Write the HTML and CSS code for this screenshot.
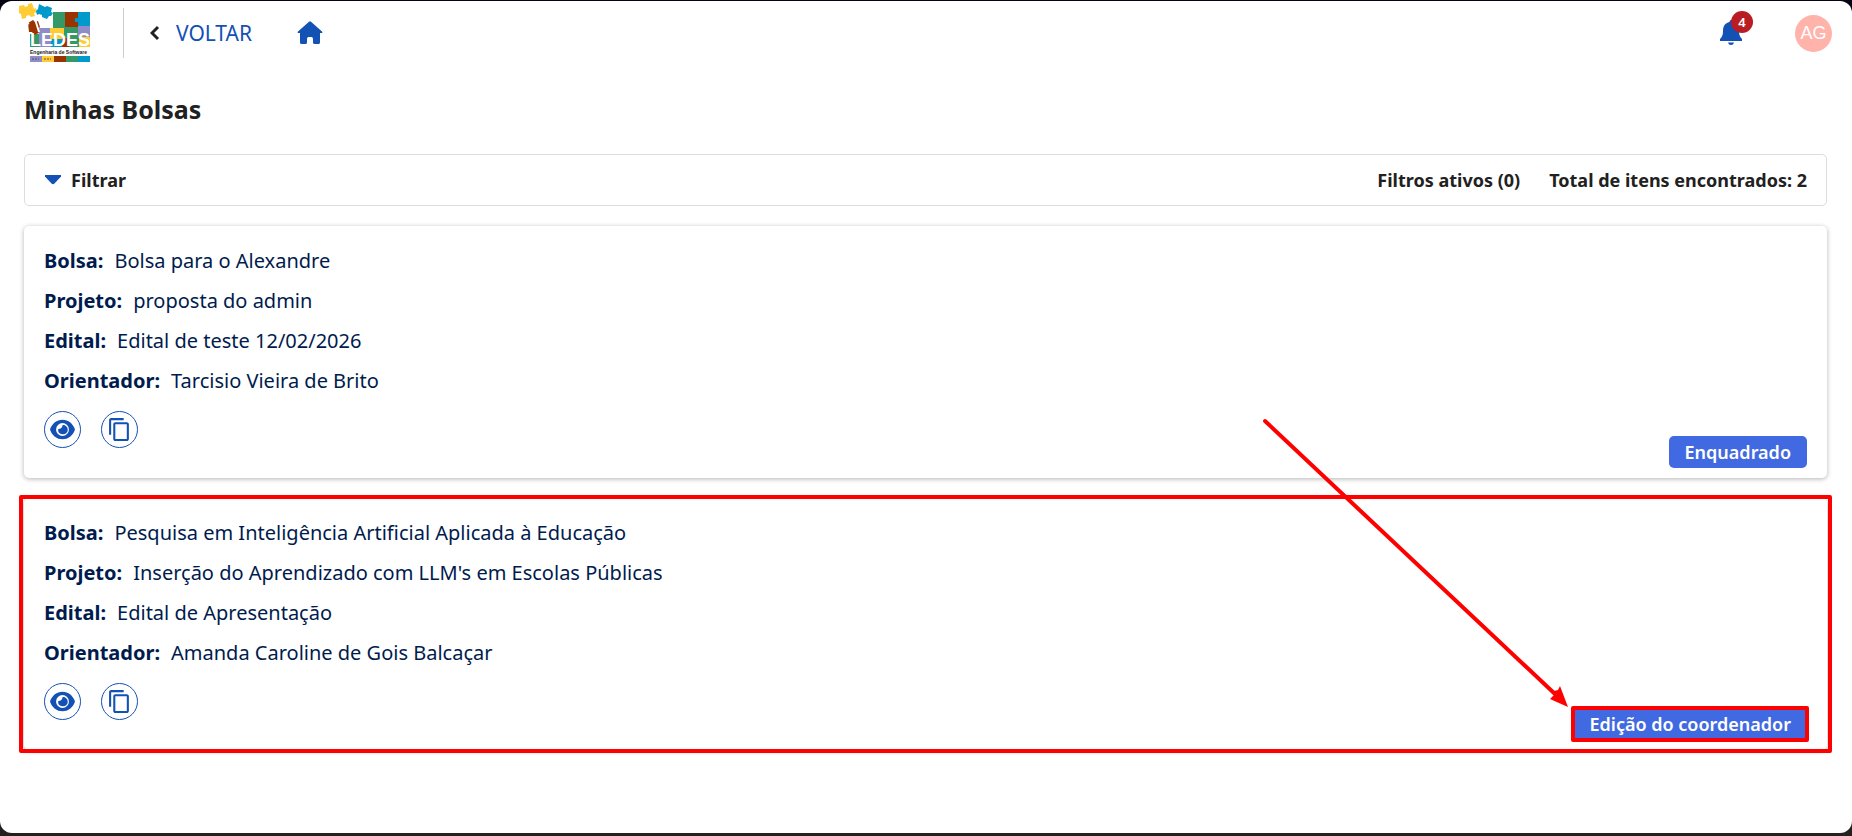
FILE: index.html
```html
<!DOCTYPE html>
<html lang="pt-BR">
<head>
  <meta charset="UTF-8" />
  <meta name="viewport" content="width=device-width, initial-scale=1.0" />
  <title>Minhas Bolsas</title>
  <link rel="stylesheet" href="styles.css">
</head>
<body>
  <!-- shared icons -->
  <svg width="0" height="0" class="sprite" aria-hidden="true">
    <symbol id="icon-eye" viewBox="0 0 24 24">
      <path fill-rule="evenodd" d="M12 2.600C6.500 2.600 2 6 0 12c2 6 6.500 9.400 12 9.400S22 18 24 12C22 6 17.500 2.600 12 2.600zM12 18.200a6.200 6.200 0 1 1 0-12.400 6.200 6.200 0 0 1 0 12.400z" />
      <path d="M12 7.800c0 2.200-1.600 3.700-4 3.700-.8 2.800 1.200 5 4 5a4.400 4.400 0 1 0 0-8.700z" />
    </symbol>
    <symbol id="icon-copy" viewBox="0 0 24 24">
      <path d="M16 1H4c-1.100 0-2 .9-2 2v14h2V3h12V1zm3 4H8c-1.100 0-2 .9-2 2v14c0 1.100.9 2 2 2h11c1.100 0 2-.9 2-2V7c0-1.100-.9-2-2-2zm0 16H8V7h11v14z" />
    </symbol>
  </svg>

  <div class="page">
    <header class="topbar">
      <a href="#" class="logo" aria-label="LEDES">
        <svg viewBox="0 0 72 58" width="72" height="58">
          <!-- puzzle board -->
          <path d="M11 30h10v13H11z" fill="#339966" />
          <path d="M20 24h12v19H20z" fill="#8f8cc8" />
          <path d="M34 8h13v16H34z" fill="#339966" />
          <path d="M46 8h13v6h-3v4h3v6H46z" fill="#993300" />
          <path d="M59 8h12v15H59v-5h-3v-4h3z" fill="#0099cc" />
          <path d="M31 24h14v12H31z" fill="#ffcc33" />
          <path d="M45 23h14v13H45z" fill="#339966" />
          <path d="M59 22h12v12H59z" fill="#8f8cc8" />
          <path d="M32 35h12v8H32z" fill="#0099cc" />
          <path d="M43 34h8v9h-8z" fill="#993300" />
          <path d="M50 34h10v9H50z" fill="#339966" />
          <path d="M60 33h11v10H60z" fill="#ffcc33" />
          <!-- loose pieces -->
          <path d="M0 2l5-1 1 2 3-1V0l4-1 2 6 2-1 1 4-3 1 1 3-4 1-2-2-3 1v2l-4 1-1-5-2-1z" fill="#ffcc33" />
          <path d="M20 0l6 3 2-1 5 2-1 4 2 1-2 3-2 0-2 3-5-2 0-2-3-1-2 1-1-4 2-2z" fill="#0099cc" />
          <path d="M9 19l5-3 2 2 3-1 2 6-2 2 1 4-5 2-2-3-3 0z" fill="#993300" />
          <path d="M5 17l4 14M4 22l6-3M16 15l4 13" stroke="#fff" stroke-width="2" fill="none" />
          <text x="11" y="42" class="logo-name">LEDES</text>
          <text x="11" y="50" class="logo-sub">Engenharia de Software</text>
          <path d="M11 52h12v6H11z" fill="#8f8cc8" />
          <path d="M23 52h12v6H23z" fill="#ffcc33" />
          <path d="M35 52h12v6H35z" fill="#993300" />
          <path d="M47 52h12v6H47z" fill="#339966" />
          <path d="M59 52h12v6H59z" fill="#0099cc" />
          <path d="M13 55h7M25 55h7" stroke="#555" stroke-width="1" stroke-dasharray="2 1" />
        </svg>
      </a>
      <a href="#" class="back">
        <svg viewBox="0 0 10 16" width="10" height="16"><path d="M8 2L2 8l6 6" fill="none" stroke="#212121" stroke-width="3" /></svg>
        VOLTAR
      </a>
      <a href="#" class="home" aria-label="Início">
        <svg viewBox="0 0 26 24" width="26" height="24"><path d="M12 .7q1-.9 2 0L25 10.500q1 1.500-.6 1.500H23v9.500q0 1.500-1.500 1.500h-4q-1.500 0-1.500-1.500V18q0-2-1.500-2h-3q-1.500 0-1.500 2v3.500Q10 23 8.500 23h-4Q3 23 3 21.500V12H1.600Q0 12 1 10.500z" /></svg>
      </a>
      <div class="user">
        <button type="button" class="bell" aria-label="Notificações">
          <svg viewBox="0 0 22 26" width="22" height="26"><path d="M11 0q1.500 0 1.500 2C17 3 19 6 19 11c0 4 1 6 3 8v2H0v-2c2-2 3-4 3-8 0-5 2-8 6.500-9Q9.500 0 11 0zM8 22.500h6q-.5 2.500-3 2.500t-3-2.500z" /></svg>
          <span class="count">4</span>
        </button>
        <button type="button" class="avatar">AG</button>
      </div>
    </header>

    <main class="content">
      <h1>Minhas Bolsas</h1>

      <section class="filter">
        <button type="button" class="filter-toggle">
          <svg viewBox="0 0 16 10" width="16" height="10"><path d="M0 0h16v1.500L9.500 8.500q-1.500 1.500-3 0L0 1.500z" /></svg>
          Filtrar
        </button>
        <span class="filter-active">Filtros ativos (0)</span>
        <span>Total de itens encontrados: 2</span>
      </section>

      <article class="card">
        <dl>
          <div class="row"><dt>Bolsa:</dt><dd>Bolsa para o Alexandre</dd></div>
          <div class="row"><dt>Projeto:</dt><dd>proposta do admin</dd></div>
          <div class="row"><dt>Edital:</dt><dd>Edital de teste 12/02/2026</dd></div>
          <div class="row"><dt>Orientador:</dt><dd>Tarcisio Vieira de Brito</dd></div>
        </dl>
        <div class="card-footer">
          <button type="button" class="action" aria-label="Visualizar"><svg width="25" height="25"><use href="#icon-eye" /></svg></button>
          <button type="button" class="action" aria-label="Copiar"><svg width="25" height="25"><use href="#icon-copy" /></svg></button>
          <span class="status">Enquadrado</span>
        </div>
      </article>

      <article class="card marked">
        <dl>
          <div class="row"><dt>Bolsa:</dt><dd>Pesquisa em Inteligência Artificial Aplicada à Educação</dd></div>
          <div class="row"><dt>Projeto:</dt><dd>Inserção do Aprendizado com LLM's em Escolas Públicas</dd></div>
          <div class="row"><dt>Edital:</dt><dd>Edital de Apresentação</dd></div>
          <div class="row"><dt>Orientador:</dt><dd>Amanda Caroline de Gois Balcaçar</dd></div>
        </dl>
        <div class="card-footer">
          <button type="button" class="action" aria-label="Visualizar"><svg width="25" height="25"><use href="#icon-eye" /></svg></button>
          <button type="button" class="action" aria-label="Copiar"><svg width="25" height="25"><use href="#icon-copy" /></svg></button>
          <span class="status">Edição do coordenador
            <svg class="arrow" viewBox="0 0 310 290" width="310" height="290" aria-hidden="true">
              <path d="M2 3l290 273" fill="none" stroke="#f00" stroke-width="4" stroke-linecap="round" />
              <path d="M305 289l-18-8 4-4 0-4 4-1 2-4z" fill="#f00" />
            </svg>
          </span>
        </div>
      </article>
    </main>
  </div>
</body>
</html>
```
FILE: styles.css
```css
* {
  box-sizing: border-box;
}
body {
  margin: 0;
  min-height: 100vh;
  padding: 1px 0 3px;
  display: flex;
  background: linear-gradient(#060312 50%, #24201f 100%);
  font-family: "Noto Sans", sans-serif;
  color: #212121;
}
a {
  color: #1351b4;
  text-decoration: none;
}
button {
  font-family: inherit;
  color: inherit;
  background: none;
  border: none;
  padding: 0;
  cursor: pointer;
}
svg {
  display: block;
  fill: #1351b4;
}
.sprite {
  position: absolute;
}
.page {
  flex: 1;
  background: #fff;
  border-radius: 12px;
}
.topbar {
  display: flex;
  align-items: center;
  height: 64px;
  padding: 0 20px 0 19px;
}
.logo {
  padding-right: 32px;
}
.logo svg {
  overflow: visible;
}
.logo-name {
  font: bold 18px "Liberation Sans", Arial, sans-serif;
  fill: #fff;
}
.logo-sub {
  font: bold 5px "Liberation Sans", Arial, sans-serif;
  fill: #222;
}
.back {
  display: flex;
  align-items: center;
  gap: 16px;
  height: 50px;
  padding-left: 26px;
  border-left: 1px solid #ccc;
  font-size: 21px;
}
.home {
  margin-left: 45px;
}
.user {
  display: flex;
  align-items: center;
  gap: 53px;
  margin-left: auto;
}
.bell {
  position: relative;
}
.count {
  position: absolute;
  top: -9px;
  left: 11px;
  width: 22px;
  height: 22px;
  border-radius: 50%;
  background: #b91c22;
  color: #fff;
  font-size: 13px;
  font-weight: 600;
  line-height: 22px;
}
.avatar {
  width: 37px;
  height: 37px;
  border-radius: 50%;
  background: #ffb3ab;
  color: #fff;
  font-family: "Liberation Sans", Arial, sans-serif;
  font-size: 18px;
}
.content {
  padding: 24px 25px 24px 24px;
}
h1 {
  margin: 0 0 24px;
  font-size: 25px;
  line-height: 41px;
}
.filter {
  display: flex;
  align-items: center;
  height: 52px;
  padding: 0 19px 0 20px;
  border: 1px solid #ddd;
  border-radius: 5px;
  font-size: 18px;
  font-weight: bold;
}
.filter-toggle {
  display: flex;
  align-items: center;
  gap: 10px;
  font-size: 18px;
  font-weight: bold;
}
.filter-active {
  margin: 0 29px 0 auto;
}
.card {
  position: relative;
  margin-top: 20px;
  padding: 15px 20px 10px;
  border-radius: 5px;
  box-shadow: 0 1px 5px rgba(0, 0, 0, 0.3);
  color: #001b4e;
  font-size: 20px;
}
.card dl {
  margin: 0;
}
.row {
  display: flex;
  gap: 11px;
  line-height: 40px;
}
.row dt {
  font-weight: bold;
}
.row dd {
  margin: 0;
}
.card-footer {
  display: flex;
  gap: 20px;
  padding-top: 10px;
}
.action {
  display: grid;
  place-items: center;
  width: 37px;
  height: 37px;
  border: 1px solid #1351b4;
  border-radius: 50%;
}
.status {
  position: relative;
  margin: 25px 0 0 auto;
  padding: 0 16px;
  border-radius: 5px;
  background: #4169e1;
  color: #fff;
  font-size: 18px;
  font-weight: 600;
  line-height: 32px;
}
/* highlight frames */
.marked::after,
.marked .status::after {
  content: "";
  position: absolute;
  inset: -3px -5px;
  border: 4px solid #f00;
  border-radius: 2px;
}
.marked .status::after {
  inset: -2px;
}
.arrow {
  position: absolute;
  right: 100%;
  bottom: 100%;
}
```
